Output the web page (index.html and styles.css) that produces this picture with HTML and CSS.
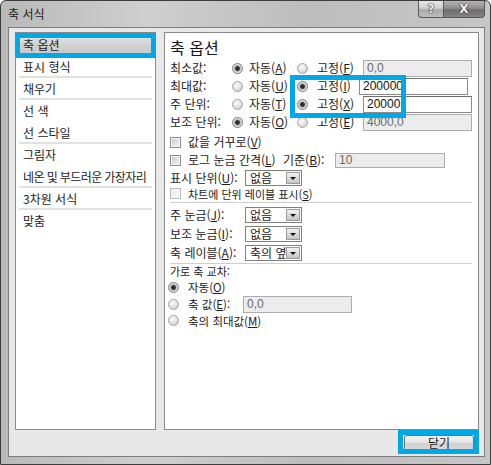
FILE: index.html
```html
<!DOCTYPE html>
<html lang="ko">
<head>
<meta charset="utf-8">
<title>축 서식</title>
<link rel="stylesheet" href="styles.css">
</head>
<body>
<div class="window">
  <div class="titlebar">
    <span class="title">축 서식</span>
    <div class="caption-btns">
      <span class="cbtn help">?</span>
      <span class="cbtn close">X</span>
    </div>
  </div>
  <div class="client">
    <div class="panels">
      <ul class="nav">
        <li class="item selected">축 옵션</li>
        <li class="item sep">표시 형식</li>
        <li class="item sep">채우기</li>
        <li class="item">선 색</li>
        <li class="item sep">선 스타일</li>
        <li class="item">그림자</li>
        <li class="item sep tight">네온 및 부드러운 가장자리</li>
        <li class="item sep">3차원 서식</li>
        <li class="item">맞춤</li>
      </ul>
      <div class="content">
        <div class="heading">축 옵션</div>

        <div class="row h18">
          <span class="lbl">최소값:</span>
          <span class="radio on"></span><span class="rt1">자동(<u>A</u>)</span>
          <span class="radio"></span><span class="rt2">고정(<u>F</u>)</span>
          <span class="field disabled w109">0,0</span>
        </div>
        <div class="row h18">
          <span class="lbl">최대값:</span>
          <span class="radio"></span><span class="rt1">자동(<u>U</u>)</span>
          <span class="radio on"></span><span class="rt2 narrow">고정(<u>I</u>)</span>
          <span class="field w109">200000</span>
        </div>
        <div class="row h18">
          <span class="lbl">주 단위:</span>
          <span class="radio"></span><span class="rt1">자동(<u>T</u>)</span>
          <span class="radio on"></span><span class="rt2">고정(<u>X</u>)</span>
          <span class="field w109">20000</span>
        </div>
        <div class="row h18">
          <span class="lbl">보조 단위:</span>
          <span class="radio on"></span><span class="rt1">자동(<u>O</u>)</span>
          <span class="radio"></span><span class="rt2">고정(<u>E</u>)</span>
          <span class="field disabled w109">4000,0</span>
        </div>

        <div class="row h18 gap-top">
          <span class="check"></span><span>값을 거꾸로(<u>V</u>)</span>
        </div>
        <div class="row h18">
          <span class="check"></span><span class="t-log">로그 눈금 간격(<u>L</u>)</span>
          <span class="t-base">기준(<u>B</u>):</span>
          <span class="field disabled w110">10</span>
        </div>
        <div class="row h17">
          <span class="lbl2">표시 단위(<u>U</u>):</span>
          <span class="select"><span class="sel-text">없음</span><span class="sel-btn"></span></span>
        </div>
        <div class="row h15 f11">
          <span class="check light"></span><span>차트에 단위 레이블 표시(<u>S</u>)</span>
        </div>

        <div class="divider d1"></div>

        <div class="row h19">
          <span class="lbl2">주 눈금(<u>J</u>):</span>
          <span class="select"><span class="sel-text">없음</span><span class="sel-btn"></span></span>
        </div>
        <div class="row h19">
          <span class="lbl2">보조 눈금(<u>I</u>):</span>
          <span class="select"><span class="sel-text">없음</span><span class="sel-btn"></span></span>
        </div>
        <div class="row h19">
          <span class="lbl2">축 레이블(<u>A</u>):</span>
          <span class="select"><span class="sel-text">축의 옆</span><span class="sel-btn"></span></span>
        </div>

        <div class="divider d2"></div>

        <div class="row h14 f11">
          <span>가로 축 교차:</span>
        </div>
        <div class="row h18 f115">
          <span class="radio on left"></span><span>자동(<u>O</u>)</span>
        </div>
        <div class="row h16 f115">
          <span class="radio left"></span><span class="t-axis">축 값(<u>E</u>):</span>
          <span class="field disabled w109">0,0</span>
        </div>
        <div class="row h17 f115">
          <span class="radio left"></span><span>축의 최대값(<u>M</u>)</span>
        </div>
      </div>
    </div>
    <div class="footer">
      <span class="btn">닫기</span>
    </div>
  </div>

  <div class="hl hl-nav"></div>
  <div class="hl hl-fixed"></div>
  <div class="hl hl-close"></div>
</div>
</body>
</html>
```

FILE: styles.css
```css
* { box-sizing: border-box; }

html, body {
  margin: 0;
  padding: 0;
  background: #ffffff;
}

body {
  font-family: "Noto Sans CJK KR", "Noto Sans", "Liberation Sans", sans-serif;
  font-size: 12px;
  line-height: 14px;
  color: #1c1c1c;
}

u { text-decoration: underline; text-underline-offset: 1px; }

.window {
  position: relative;
  width: 491px;
  height: 465px;
  border: 1px solid #3c3c3c;
  border-radius: 6px 6px 0 0;
  background: linear-gradient(to right, #b9b9b9 0%, #cfcfcf 30%, #bdbdbd 62%, #c6c6c6 100%);
}

/* ---------- title bar ---------- */
.titlebar {
  height: 26px;
  display: flex;
  justify-content: space-between;
  align-items: flex-start;
}

.title {
  padding-left: 7px;
  line-height: 26px;
  font-size: 12px;
  color: #1a1a1a;
}

.caption-btns {
  display: flex;
  margin-right: 5px;
}

.cbtn {
  height: 17px;
  display: flex;
  align-items: center;
  justify-content: center;
  font-family: "DejaVu Sans", sans-serif;
  font-weight: bold;
  font-size: 12px;
  color: #f4f4f4;
  text-shadow: 0 0 1px #222, 0 0 1px #222, 0 0 1px #222;
  border: 1px solid #5a5a5a;
  border-top: none;
}

.help {
  width: 26px;
  border-radius: 0 0 0 4px;
  background: linear-gradient(to bottom, #e6e6e6 0%, #cfcfcf 45%, #a9a9a9 55%, #bdbdbd 100%);
}

.close {
  width: 41px;
  border-left: none;
  border-radius: 0 0 4px 0;
  background: linear-gradient(to bottom, #b4b4b4 0%, #8f8f8f 45%, #6c6c6c 55%, #858585 100%);
}

/* ---------- client area ---------- */
.client {
  height: 430px;
  margin: 0 5px 0 7px;
  border: 1px solid #7d7d7d;
  background: #e8e8e8;
  padding: 4px 5px 0 6px;
}

.panels {
  display: flex;
  gap: 8px;
  height: 398px;
}

.nav {
  width: 141px;
  margin: 0;
  padding: 0;
  list-style: none;
  background: #ffffff;
  border: 1px solid #8a8a8a;
}

.item {
  height: 22px;
  line-height: 21px;
  margin: 0 3px;
  padding-left: 4px;
  white-space: nowrap;
  color: #1c1c1c;
}

.item.sep { border-bottom: 2px solid #e2e2e2; }
.item.tight { letter-spacing: -0.6px; }

.item.selected {
  height: 23px;
  line-height: 23px;
  margin: 0;
  padding-left: 7px;
  background: linear-gradient(to bottom, #e9e9e9 0%, #d0d0d0 55%, #c6c6c6 100%);
}

.content {
  flex: 1;
  background: #ffffff;
  border: 1px solid #8a8a8a;
  padding: 5px 6px 0 5px;
}

.heading {
  height: 21px;
  padding-top: 0;
  line-height: 19px;
  font-size: 16px;
  color: #141414;
}

.row {
  display: flex;
  align-items: center;
  white-space: nowrap;
  line-height: 12px;
}

.f11 { font-size: 11px; }
.f115 { font-size: 11.5px; }

.h14 { height: 14px; }
.h15 { height: 15px; }
.h16 { height: 16px; }
.h17 { height: 17px; }
.h18 { height: 18px; }
.h19 { height: 19px; }

.gap-top { margin-top: 2px; }

.lbl { width: 62px; }
.lbl2 { width: 75px; }
.rt1 { width: 48px; margin-left: 6px; }
.rt2 { width: 46px; margin-left: 9px; }
.rt2.narrow { width: 42px; }
.t-log { width: 95px; }
.t-base { width: 52px; }
.t-axis { width: 55px; }

/* radios */
.radio {
  width: 11px;
  height: 11px;
  flex: none;
  border-radius: 50%;
  border: 1px solid #a4a4a4;
  background: radial-gradient(circle at 40% 35%, #ffffff 0%, #e4e4e4 45%, #c2c2c2 100%);
}

.radio.on {
  border-color: #7c7c7c;
  background: radial-gradient(circle at 50% 50%, #1e1e1e 0%, #3a3a3a 30%, #9a9a9a 42%, #e6e6e6 60%, #c4c4c4 100%);
}

.radio.left { margin-left: -2px; margin-right: 9px; }

/* checkboxes */
.check {
  width: 11px;
  height: 11px;
  flex: none;
  margin-right: 7px;
  border: 1px solid #8e8e8e;
  background: linear-gradient(135deg, #c8c8c8 0%, #e0e0e0 50%, #f2f2f2 100%);
  box-shadow: inset 0 0 0 1px #f6f6f6;
}

.check.light {
  border-color: #b9b9b9;
  background: linear-gradient(135deg, #ebebeb 0%, #f7f7f7 100%);
}

/* text fields */
.field {
  flex: none;
  height: 17px;
  line-height: 15px;
  padding-left: 3px;
  border: 1px solid #8b8b8b;
  border-top-color: #6e6e6e;
  background: #ffffff;
  font-family: "Liberation Sans", Arial, sans-serif;
  font-size: 12px;
  color: #111111;
}

.field.disabled {
  background: #ececec;
  border-color: #adadad;
  color: #6a6a6a;
}

.w109 { width: 109px; }
.w110 { width: 110px; height: 15px; line-height: 13px; }

/* selects */
.select {
  width: 57px;
  height: 16px;
  flex: none;
  display: flex;
  align-items: center;
  justify-content: space-between;
  border: 1px solid #7f7f7f;
  background: #ffffff;
  padding: 0 1px 0 4px;
}

.sel-text { line-height: 14px; }

.sel-btn {
  position: relative;
  width: 14px;
  height: 12px;
  flex: none;
  border: 1px solid #9a9a9a;
  background: linear-gradient(to bottom, #f3f3f3 0%, #d6d6d6 60%, #c4c4c4 100%);
}

.sel-btn::after {
  content: "";
  position: absolute;
  left: 3px;
  top: 4px;
  border-left: 3px solid transparent;
  border-right: 3px solid transparent;
  border-top: 3px solid #101010;
}

/* dividers */
.divider {
  height: 1px;
  background: #cfcfcf;
}

.d1 { margin-top: 1px; margin-bottom: 2px; }
.d2 { margin-top: 1px; margin-bottom: 0; }

/* footer */
.footer {
  height: 26px;
  display: flex;
  justify-content: flex-end;
  align-items: flex-start;
  padding-top: 5px;
  padding-right: 5px;
}

.btn {
  width: 70px;
  height: 16px;
  display: flex;
  align-items: center;
  justify-content: center;
  border: 1px solid #707070;
  border-radius: 3px;
  background: linear-gradient(to bottom, #f4f4f4 0%, #e4e4e4 45%, #cfcfcf 55%, #dadada 100%);
  font-size: 12px;
  color: #1a1a1a;
}

/* annotation highlights */
.hl {
  position: absolute;
  border: 5px solid #00a9e6;
  pointer-events: none;
}

.hl-nav { left: 14px; top: 32px; width: 141px; height: 25px; }
.hl-fixed { left: 289px; top: 74px; width: 116px; height: 43px; }
.hl-close { left: 397px; top: 429px; width: 81px; height: 24px; }
```
